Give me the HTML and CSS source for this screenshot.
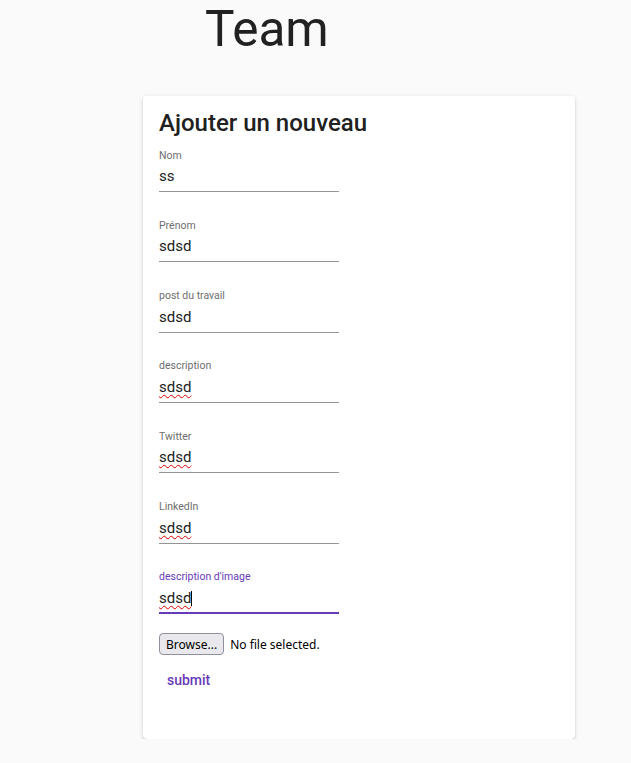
FILE: index.html
```html
<!DOCTYPE html>
<html lang="fr">
<head>
<meta charset="utf-8">
<title>Team</title>
<link rel="stylesheet" href="styles.css">
</head>
<body>
<h1 class="page-title">Team</h1>
<div class="card">
  <h2 class="card-title">Ajouter un nouveau</h2>
  <div class="field">
    <div class="field-label">Nom</div>
    <div class="field-input">ss</div>
  </div>
  <div class="field">
    <div class="field-label">Prénom</div>
    <div class="field-input">sdsd</div>
  </div>
  <div class="field">
    <div class="field-label">post du travail</div>
    <div class="field-input">sdsd</div>
  </div>
  <div class="field">
    <div class="field-label">description</div>
    <div class="field-input"><span class="misspelled">sdsd</span></div>
  </div>
  <div class="field">
    <div class="field-label">Twitter</div>
    <div class="field-input"><span class="misspelled">sdsd</span></div>
  </div>
  <div class="field">
    <div class="field-label">LinkedIn</div>
    <div class="field-input"><span class="misspelled">sdsd</span></div>
  </div>
  <div class="field focused">
    <div class="field-label">description d'image</div>
    <div class="field-input"><span class="misspelled">sdsd</span><span class="caret"></span></div>
  </div>
  <div class="file-row">
    <span class="browse-btn">Browse...</span>
    <span class="file-text">No file selected.</span>
  </div>
  <div class="actions">
    <span class="submit-btn">submit</span>
  </div>
</div>
</body>
</html>
```
FILE: styles.css
```css
html, body {
  margin: 0;
  padding: 0;
  background: #fafafa;
  font-family: Roboto, "Liberation Sans", sans-serif;
  color: rgba(0, 0, 0, 0.87);
}

.page-title {
  margin: 0 0 0 205px;
  padding-top: 1px;
  font-size: 49.5px;
  font-weight: 400;
  line-height: 56px;
  color: #212121;
}

.card {
  margin: 39px 0 0 143px;
  width: 432px;
  height: 643px;
  box-sizing: border-box;
  padding: 11px 16px 0 16px;
  background: #fff;
  border-radius: 4px;
  box-shadow: 0 3px 1px -2px rgba(0, 0, 0, 0.2), 0 2px 2px 0 rgba(0, 0, 0, 0.14), 0 1px 5px 0 rgba(0, 0, 0, 0.12);
}

.card-title {
  margin: 0 0 10.5px 0;
  font-size: 24px;
  font-weight: 500;
  line-height: 32px;
  color: #212121;
}

.field {
  width: 180px;
  margin-bottom: 27.83px;
}

.field-label {
  font-size: 10.5px;
  line-height: 12px;
  height: 12px;
  color: #6e6e6e;
  margin-bottom: 5.5px;
}

.field-input {
  font-size: 15px;
  line-height: 18px;
  height: 18px;
  padding-bottom: 6px;
  border-bottom: 1px solid #949494;
  color: #212121;
}

.field.focused .field-label {
  color: #673ab7;
}

.field.focused .field-input {
  padding-bottom: 5px;
  border-bottom: 2px solid #673ab7;
}

.misspelled {
  text-decoration: underline wavy #e00000;
  text-decoration-thickness: 1px;
  text-underline-offset: 2px;
}

.caret {
  display: inline-block;
  width: 1px;
  height: 15px;
  background: #000;
  vertical-align: -3px;
}

.file-row {
  display: flex;
  align-items: center;
  gap: 6px;
  margin-top: -8.8px;
  height: 22px;
  font-family: "Noto Sans", "Open Sans", sans-serif;
  font-size: 12px;
  color: #000;
}

.browse-btn {
  display: inline-flex;
  align-items: center;
  box-sizing: border-box;
  height: 22px;
  padding: 0 6px;
  background: #e9e9ed;
  border: 1px solid #8f8f9d;
  border-radius: 4px;
}

.actions {
  margin-top: 6.5px;
}

.submit-btn {
  display: inline-block;
  padding: 0 8px;
  line-height: 36px;
  font-size: 14px;
  font-weight: 500;
  color: #673ab7;
}
```
